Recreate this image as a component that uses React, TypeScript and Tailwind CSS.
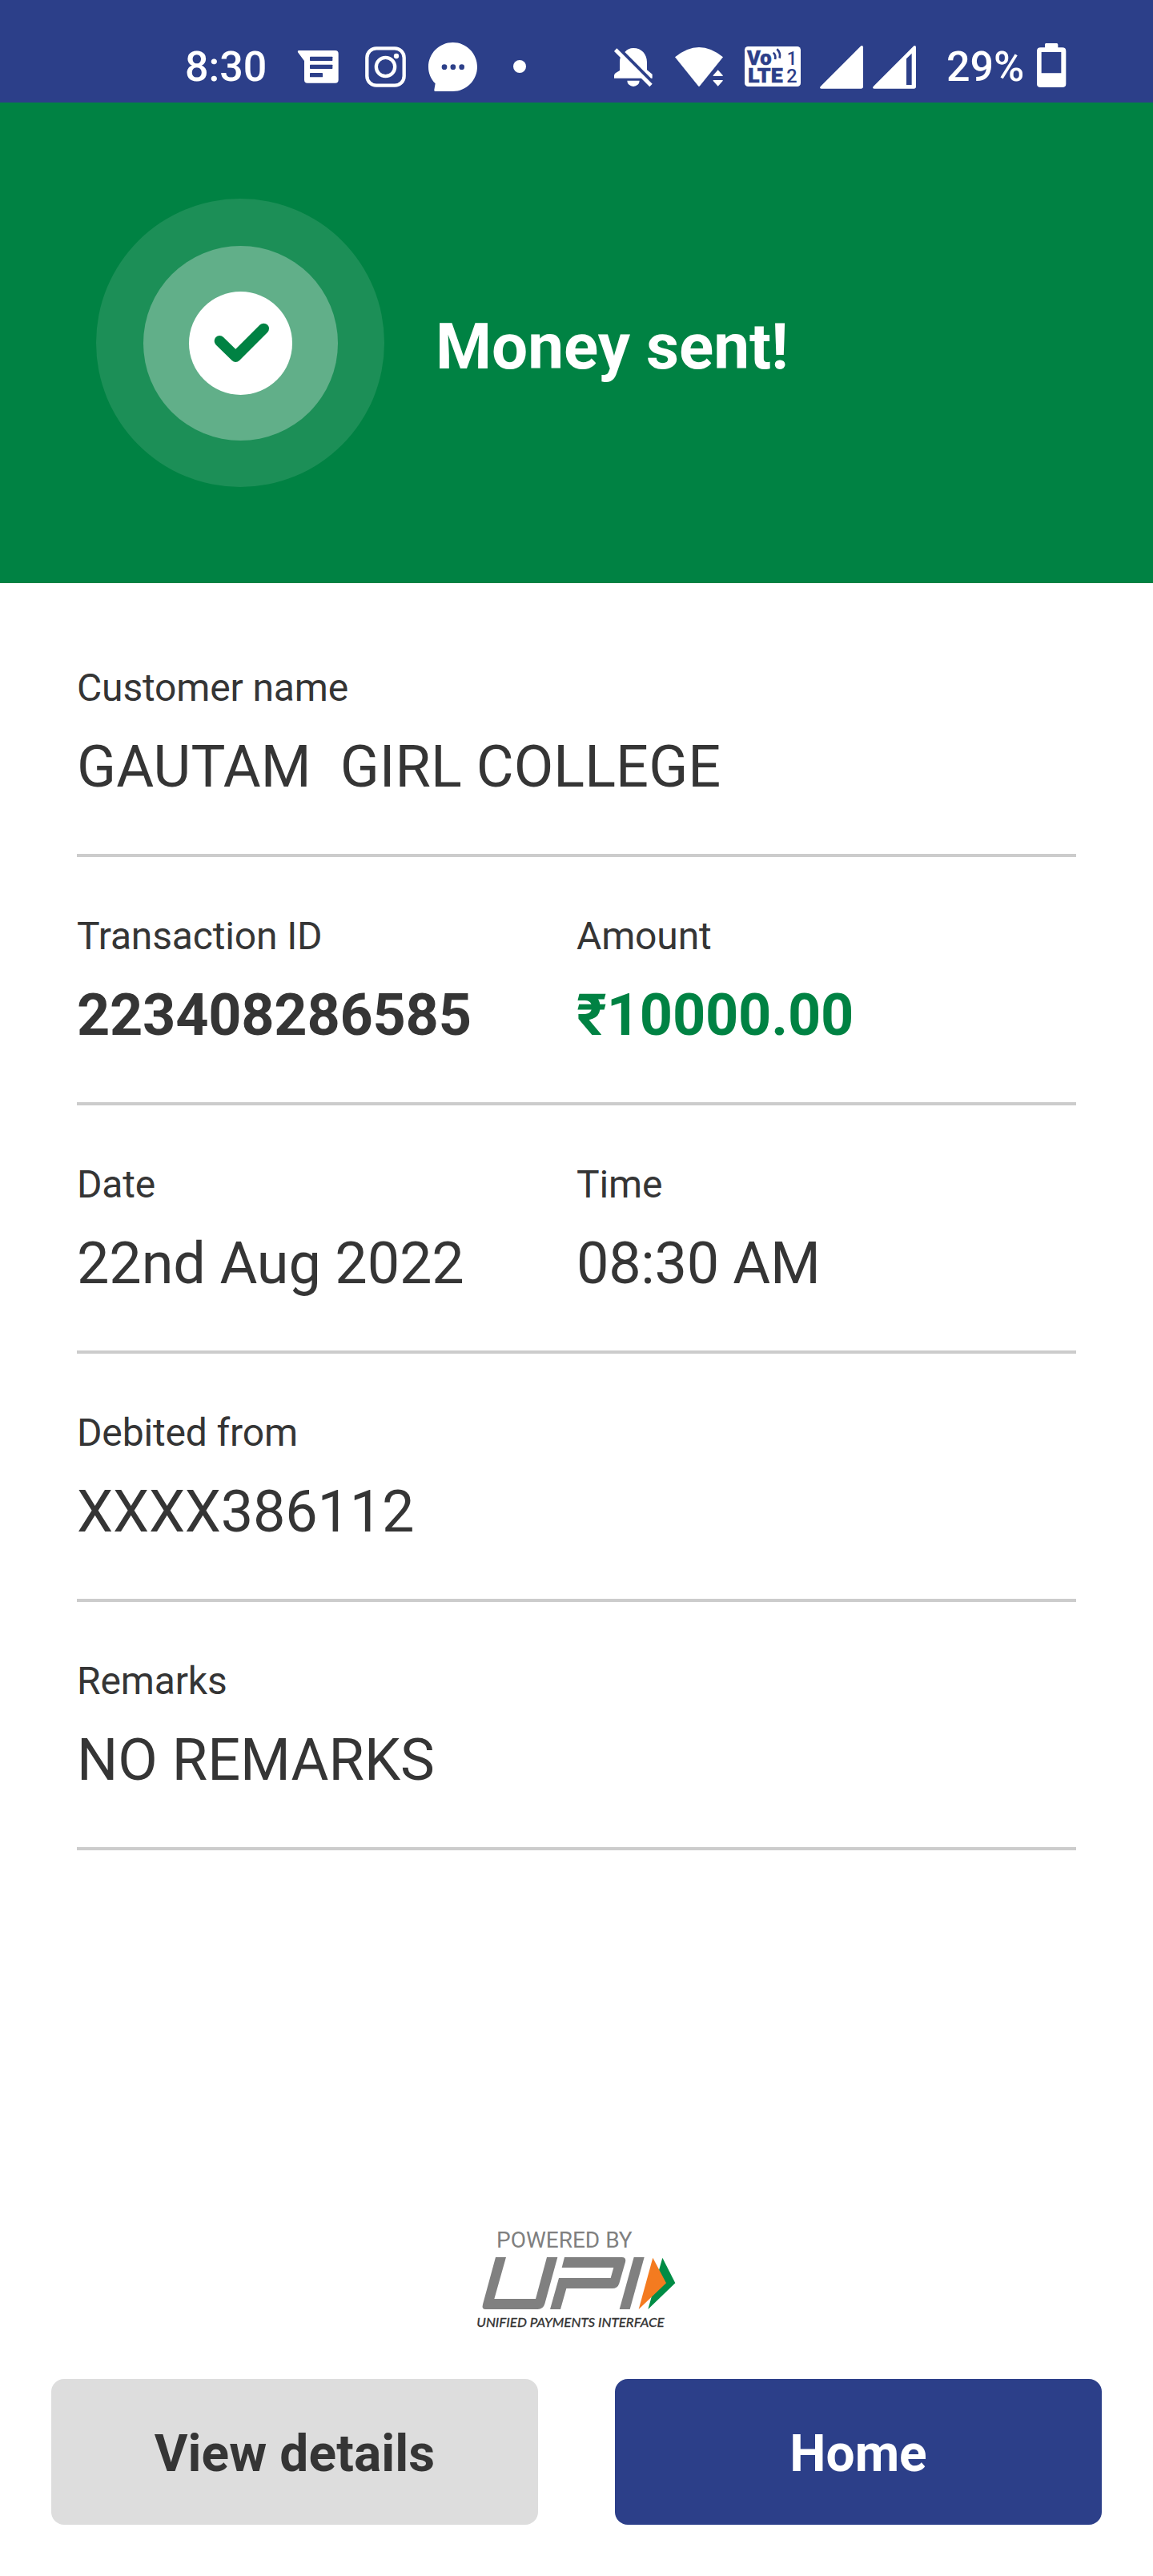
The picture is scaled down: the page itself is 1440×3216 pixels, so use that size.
import type { ReactNode } from "react";

type Field = { label: string; value: string; tone?: string };

const rows: Field[][] = [
  [{ label: "Customer name", value: "GAUTAM  GIRL COLLEGE", tone: "tracking-[0.1px]" }],
  [
    { label: "Transaction ID", value: "223408286585", tone: "font-bold tracking-[-0.25px]" },
    { label: "Amount", value: "₹10000.00", tone: "font-bold tracking-[-0.2px] text-[#008243]" },
  ],
  [
    { label: "Date", value: "22nd Aug 2022", tone: "tracking-[-0.15px]" },
    { label: "Time", value: "08:30 AM", tone: "tracking-[-0.3px]" },
  ],
  [{ label: "Debited from", value: "XXXX386112", tone: "tracking-[-0.2px]" }],
  [{ label: "Remarks", value: "NO REMARKS" }],
];

function Glyph({ box, className, children }: { box: string; className: string; children: ReactNode }) {
  return (
    <svg viewBox={box} className={`h-[66px] shrink-0 ${className}`} fill="#fff">
      {children}
    </svg>
  );
}

const navy = "#2c3f89";

function StatusBar() {
  return (
    <header className="flex h-32 items-start bg-[#2c3f89] pt-[50px] pl-[231px] text-[52px] leading-[60px] font-medium text-white">
      <span className="mt-1 w-[139px]">8:30</span>
      <Glyph box="510 60 162 198" className="w-[54px]">
        <path d="M520 99H656Q668 99 668 111V209Q668 221 656 221H552Q540 221 540 209V138L516 106Q514 99 520 99Z" />
        <g fill={navy}>
          <rect x="561" y="122" width="85" height="16" rx="2" />
          <rect x="561" y="152" width="85" height="16" rx="2" />
          <rect x="561" y="183" width="48" height="16" rx="2" />
        </g>
      </Glyph>
      <Glyph box="762 60 165 198" className="ml-[30px] w-[55px]">
        <rect x="775" y="91" width="139" height="139" rx="35" fill="none" stroke="#fff" strokeWidth="13" />
        <circle cx="844.500" cy="160.500" r="35" fill="none" stroke="#fff" strokeWidth="13" />
        <circle cx="885" cy="120" r="9.500" />
      </Glyph>
      <Glyph box="999 60 195 198" className="ml-6 w-[65px]">
        <path d="M1097 69C1147 69 1188 110 1188 160.500C1188 211 1147 252 1097 252H1030Q1025 251 1027 246L1031 223C1014 206 1005 184 1005 160.500C1005 110 1046 69 1097 69Z" />
        <g fill={navy}>
          <circle cx="1065" cy="161" r="10" />
          <circle cx="1097.500" cy="161" r="10" />
          <circle cx="1130" cy="161" r="10" />
        </g>
      </Glyph>
      <Glyph box="1317 60 60 198" className="ml-[41px] w-5">
        <circle cx="1347" cy="159" r="24" />
      </Glyph>
      <Glyph box="75 60 156 198" className="ml-[106px] w-[52px]">
        <path d="M121 105Q134 90 153 90C184 90 204 113 204 143V172L224 188V203H219Z" />
        <path d="M106 120L190 203H81V193Q81 188 86 184L102 174V143Q102 130 106 120Z" />
        <path d="M130 212H176A23 22 0 0 1 130 212Z" />
        <path d="M91 91L224 224L214 235L81 102Z" />
      </Glyph>
      <Glyph box="303 60 192 198" className="ml-6 w-16">
        <path d="M309 124Q399 50 489 124L402 232Q399 236 396 232Z" />
        <path d="M470 172L488 192V195H452V192ZM452 210H488V213L470 233L452 213Z" />
      </Glyph>
      <Glyph box="564 60 222 198" className="ml-[23px] w-[74px]">
        <rect x="570" y="84" width="210" height="150" rx="13" />
        <g fill={navy} stroke={navy} strokeWidth="1.500" fontFamily="Roboto" fontWeight="900">
          <text x="579" y="152" fontSize="79" textLength="92" lengthAdjust="spacingAndGlyphs">Vo</text>
          <text x="582" y="220" fontSize="79" textLength="131" lengthAdjust="spacingAndGlyphs">LTE</text>
        </g>
        <g fill={navy} fontFamily="Roboto" fontWeight="500">
          <text x="728" y="152" fontSize="74" textLength="38" lengthAdjust="spacingAndGlyphs">1</text>
          <text x="727" y="219" fontSize="72" textLength="40" lengthAdjust="spacingAndGlyphs">2</text>
        </g>
        <path d="M677 107Q688 116 684 132M691 94Q706 108 701 128" fill="none" stroke={navy} strokeWidth="8" />
      </Glyph>
      <Glyph box="36 60 174 198" className="ml-5 w-[58px]">
        <path d="M196 82Q204 78 204 88V234Q204 242 196 242H48Q39 242 44 234Z" />
      </Glyph>
      <Glyph box="234 60 174 198" className="ml-2 w-[58px]">
        <path
          fillRule="evenodd"
          d="M394 82Q402 78 402 88V234Q402 242 394 242H246Q237 242 242 234ZM386 110L366 130V228H386Z"
        />
      </Glyph>
      <span className="mt-1 ml-9 w-[111px]">29%</span>
      <Glyph box="849 60 120 198" className="w-10">
        <path
          fillRule="evenodd"
          d="M889 72H929Q934 72 934 77V88H950Q964 88 964 101V224Q964 237 950 237H869Q855 237 855 224V101Q855 88 869 88H885V77Q885 72 889 72ZM872 105V184H946V105Z"
        />
      </Glyph>
    </header>
  );
}

function SuccessBadge() {
  return (
    <div className="flex size-[360px] items-center justify-center rounded-full bg-[#1c8f57]">
      <div className="flex size-[243px] items-center justify-center rounded-full bg-[#61af89]">
        <div className="flex size-[129px] items-center justify-center rounded-full bg-white">
          <svg viewBox="405 399 390 390" className="size-[130px] shrink-0">
            <path
              d="M523 587L583 646L688 541"
              fill="none"
              stroke="#008243"
              strokeWidth="40"
              strokeLinecap="round"
              strokeLinejoin="round"
            />
          </svg>
        </div>
      </div>
    </div>
  );
}

function UpiLogo() {
  return (
    <svg viewBox="90 165 780 285" className="h-[95px] w-[260px]">
      <g fill="#808080">
        <path d="M177 174H216L172 330H327L369 174H409L361 349Q355 369 335 369H139Q124 369 129 350Z" />
        <path d="M435 174H650Q667 174 663 192L640 272Q634 291 614 291H442L420 369H381L414 252H608L619 213H425Z" />
        <path d="M695 174H734L680 369H641Z" />
      </g>
      <path d="M802 176L850 271L748 369Z" fill="#008c45" />
      <path d="M766 176L816 271L713 369Z" fill="#f47b20" />
      <text
        x="106"
        y="435"
        fontFamily="Lato"
        fontStyle="italic"
        fontWeight="400"
        fontSize="48"
        fill="#333"
        stroke="#333"
        strokeWidth="1"
        textLength="703"
        lengthAdjust="spacingAndGlyphs"
      >
        UNIFIED PAYMENTS INTERFACE
      </text>
    </svg>
  );
}

export default function App() {
  return (
    <div className="flex h-[3216px] w-[1440px] flex-col bg-white font-[Roboto,sans-serif] text-[#353535]">
      <StatusBar />
      <section className="flex h-[600px] items-center bg-[#008243] pl-[120px]">
        <SuccessBadge />
        <h1 className="mt-[10px] ml-16 text-[80px] leading-[94px] font-bold text-white">Money sent!</h1>
      </section>
      <main className="px-24 pt-8">
        {rows.map((fields) => (
          <div key={fields[0].label} className="grid h-[310px] grid-cols-2 border-b-4 border-[#cccccc] pt-[71px]">
            {fields.map((field) => (
              <div key={field.label} className="whitespace-pre">
                <div className="text-[48px] leading-[56px] tracking-[-0.15px]">{field.label}</div>
                <div className={`mt-[29px] text-[72px] leading-[84px] ${field.tone ?? ""}`}>{field.value}</div>
              </div>
            ))}
          </div>
        ))}
      </main>
      <footer className="mt-auto">
        <div className="flex flex-col items-start pl-[590px]">
          <span className="mb-0.5 ml-[30px] text-[28px] leading-[33px] text-[#808080]">POWERED BY</span>
          <UpiLogo />
        </div>
        <div className="mt-[60px] grid grid-cols-2 gap-24 px-16 pb-16 text-[64px] font-bold">
          <button className="h-[182px] rounded-2xl bg-[#dddddd] pt-1.5 tracking-[0.1px]">View details</button>
          <button className="h-[182px] rounded-2xl bg-[#2c3f89] pt-1.5 text-white">Home</button>
        </div>
      </footer>
    </div>
  );
}
